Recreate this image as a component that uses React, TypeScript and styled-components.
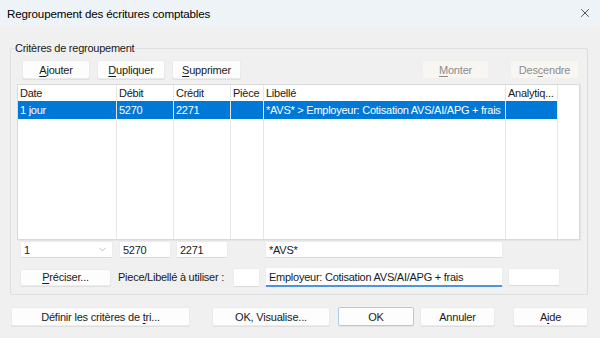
import React from 'react';
import styled, { createGlobalStyle } from 'styled-components';
import { ChevronDown, X } from 'lucide-react';

const GlobalStyle = createGlobalStyle`
    html, body {
        margin: 0;
        padding: 0;
        background: #f0f0f0;
    }
    * {
        box-sizing: border-box;
    }
`;

const Window = styled.div`
    width: 600px;
    height: 338px;
    background: #f0f0f0;
    font-family: "Liberation Sans", Arial, sans-serif;
    font-size: 11px;
    letter-spacing: -0.25px;
    color: #1a1a1a;
    display: flex;
    flex-direction: column;
    overflow: hidden;
`;

const TitleBar = styled.div`
    height: 26px;
    flex-shrink: 0;
    background: #eef3f8;
    display: flex;
    align-items: center;
    justify-content: space-between;
    padding: 0 8px 0 7px;
    font-size: 11.6px;
    letter-spacing: -0.15px;
    color: #000;
`;

const GroupBox = styled.div`
    margin: 22px 12px 0 10px;
    height: 247px;
    border: 1px solid #dedede;
    border-radius: 2px;
    display: flex;
    flex-direction: column;
    padding: 0 8px 0 6px;
`;

const Legend = styled.div`
    align-self: flex-start;
    margin: -8px 0 0 -3px;
    padding: 0 1px;
    height: 15px;
    line-height: 15px;
    background: #f0f0f0;
    color: #1a1a1a;
`;

const Toolbar = styled.div`
    display: flex;
    align-items: center;
    margin: 4px 0 0 5px;
    gap: 7px;
`;

const Spacer = styled.div`
    flex: 1;
`;

const Button = styled.button<{ w: number; h?: number; disabled?: boolean; primary?: boolean }>`
    width: ${p => p.w}px;
    height: ${p => p.h ?? 19}px;
    padding: 0;
    font-family: inherit;
    font-size: 11px;
    letter-spacing: -0.2px;
    color: ${p => (p.disabled ? '#8c8c8c' : '#1a1a1a')};
    background: ${p => (p.disabled ? '#f8f6f2' : '#fdfdfd')};
    border: 1px solid ${p => (p.primary ? '#a9cdee' : p.disabled ? '#f3f0eb' : '#ebebeb')};
    border-radius: 2px;
    box-shadow: ${p => (p.disabled ? 'none' : '0 1px 0 #e0e0e0')};
    flex-shrink: 0;

    u {
        text-decoration-thickness: 1px;
        text-underline-offset: 2px;
    }
`;

const TableFrame = styled.div`
    margin: 5px 0 0 0;
    width: 563px;
    height: 156px;
    background: #fff;
    border: 1px solid #d9d9d9;
    box-shadow: 1px 1px 0 #e4e4e4;
    overflow: hidden;
    display: flex;
`;

const Column = styled.div<{ w?: number }>`
    width: ${p => (p.w ? `${p.w}px` : 'auto')};
    flex: ${p => (p.w ? '0 0 auto' : '1')};
    display: flex;
    flex-direction: column;
    border-right: ${p => (p.w ? '1px solid #e6e6e6' : 'none')};
`;

const HeadCell = styled.div`
    height: 16px;
    line-height: 16px;
    padding: 0 0 0 2px;
    white-space: nowrap;
    overflow: hidden;
    color: #1a1a1a;
`;

const DataCell = styled.div<{ selected?: boolean }>`
    height: 18px;
    line-height: 18px;
    padding: 0 0 0 2px;
    white-space: nowrap;
    overflow: hidden;
    background: ${p => (p.selected ? '#0078d7' : 'transparent')};
    color: ${p => (p.selected ? '#fff' : '#1a1a1a')};
`;

const FieldRow = styled.div<{ top: number }>`
    display: flex;
    align-items: center;
    margin: ${p => p.top}px 0 0 3px;
`;

const Input = styled.div<{ w: number; h?: number; ml: number; focused?: boolean }>`
    width: ${p => p.w}px;
    height: ${p => p.h ?? 17}px;
    margin-left: ${p => p.ml}px;
    background: #fff;
    border: 1px solid #ececec;
    border-bottom: ${p => (p.focused ? '2px solid #4f94d8' : '1px solid #dadada')};
    border-radius: 2px;
    padding: 0 3px;
    display: flex;
    align-items: center;
    white-space: nowrap;
    overflow: hidden;
    flex-shrink: 0;
`;

const Combo = styled(Input)`
    justify-content: space-between;
    padding-right: 4px;
    color: #1a1a1a;
`;

const FieldLabel = styled.span<{ ml: number; w: number }>`
    margin-left: ${p => p.ml}px;
    width: ${p => p.w}px;
    white-space: nowrap;
    flex-shrink: 0;
`;

const Footer = styled.div`
    display: flex;
    align-items: center;
    margin: 12px 0 0 11px;
`;

const Gap = styled.div<{ w: number }>`
    width: ${p => p.w}px;
    flex-shrink: 0;
`;

const columns = [
    { label: 'Date', w: 99 },
    { label: 'Débit', w: 57 },
    { label: 'Crédit', w: 57 },
    { label: 'Pièce', w: 33 },
    { label: 'Libellé', w: 242 },
    { label: 'Analytiq...', w: 52 },
];

const rows = [
    ['1 jour', '5270', '2271', '', '*AVS* > Employeur: Cotisation AVS/AI/APG + frais', ''],
];

export default function App() {
    return (
        <>
            <GlobalStyle />
            <Window>
                <TitleBar>
                    <span>Regroupement des écritures comptables</span>
                    <X size={14} strokeWidth={1.3} color="#222" />
                </TitleBar>

                <GroupBox>
                    <Legend>Critères de regroupement</Legend>

                    <Toolbar>
                        <Button w={68}><u>A</u>jouter</Button>
                        <Button w={68}><u>D</u>upliquer</Button>
                        <Button w={69}><u>S</u>upprimer</Button>
                        <Spacer />
                        <Button w={67} disabled><u>M</u>onter</Button>
                        <Gap w={7} />
                        <Button w={69} disabled>Des<u>c</u>endre</Button>
                    </Toolbar>

                    <TableFrame>
                        {columns.map((c, j) => (
                            <Column key={c.label} w={c.w}>
                                <HeadCell>{c.label}</HeadCell>
                                {rows.map((r, i) => (
                                    <DataCell key={i} selected>{r[j]}</DataCell>
                                ))}
                            </Column>
                        ))}
                        <Column />
                    </TableFrame>

                    <FieldRow top={1}>
                        <Combo w={93} ml={0}>
                            <span>1</span>
                            <ChevronDown size={11} strokeWidth={1.2} color="#8a8a8a" />
                        </Combo>
                        <Input w={52} ml={6}>5270</Input>
                        <Input w={52} ml={5}>2271</Input>
                        <Input w={238} ml={37}>*AVS*</Input>
                    </FieldRow>

                    <FieldRow top={9}>
                        <Button w={91} h={17}><u>P</u>réciser...</Button>
                        <FieldLabel ml={7} w={115}>Piece/Libellé à utiliser :</FieldLabel>
                        <Input w={27} h={19} ml={0} />
                        <Input w={238} h={20} ml={5} focused>Employeur: Cotisation AVS/AI/APG + frais</Input>
                        <Input w={52} h={18} ml={5} />
                    </FieldRow>
                </GroupBox>

                <Footer>
                    <Button w={179}>Définir les critères de <u>t</u>ri...</Button>
                    <Gap w={22} />
                    <Button w={118}>OK, Visualise...</Button>
                    <Gap w={8} />
                    <Button w={76} primary>OK</Button>
                    <Gap w={6} />
                    <Button w={75}>Annuler</Button>
                    <Gap w={18} />
                    <Button w={75}>A<u>i</u>de</Button>
                </Footer>
            </Window>
        </>
    );
}
